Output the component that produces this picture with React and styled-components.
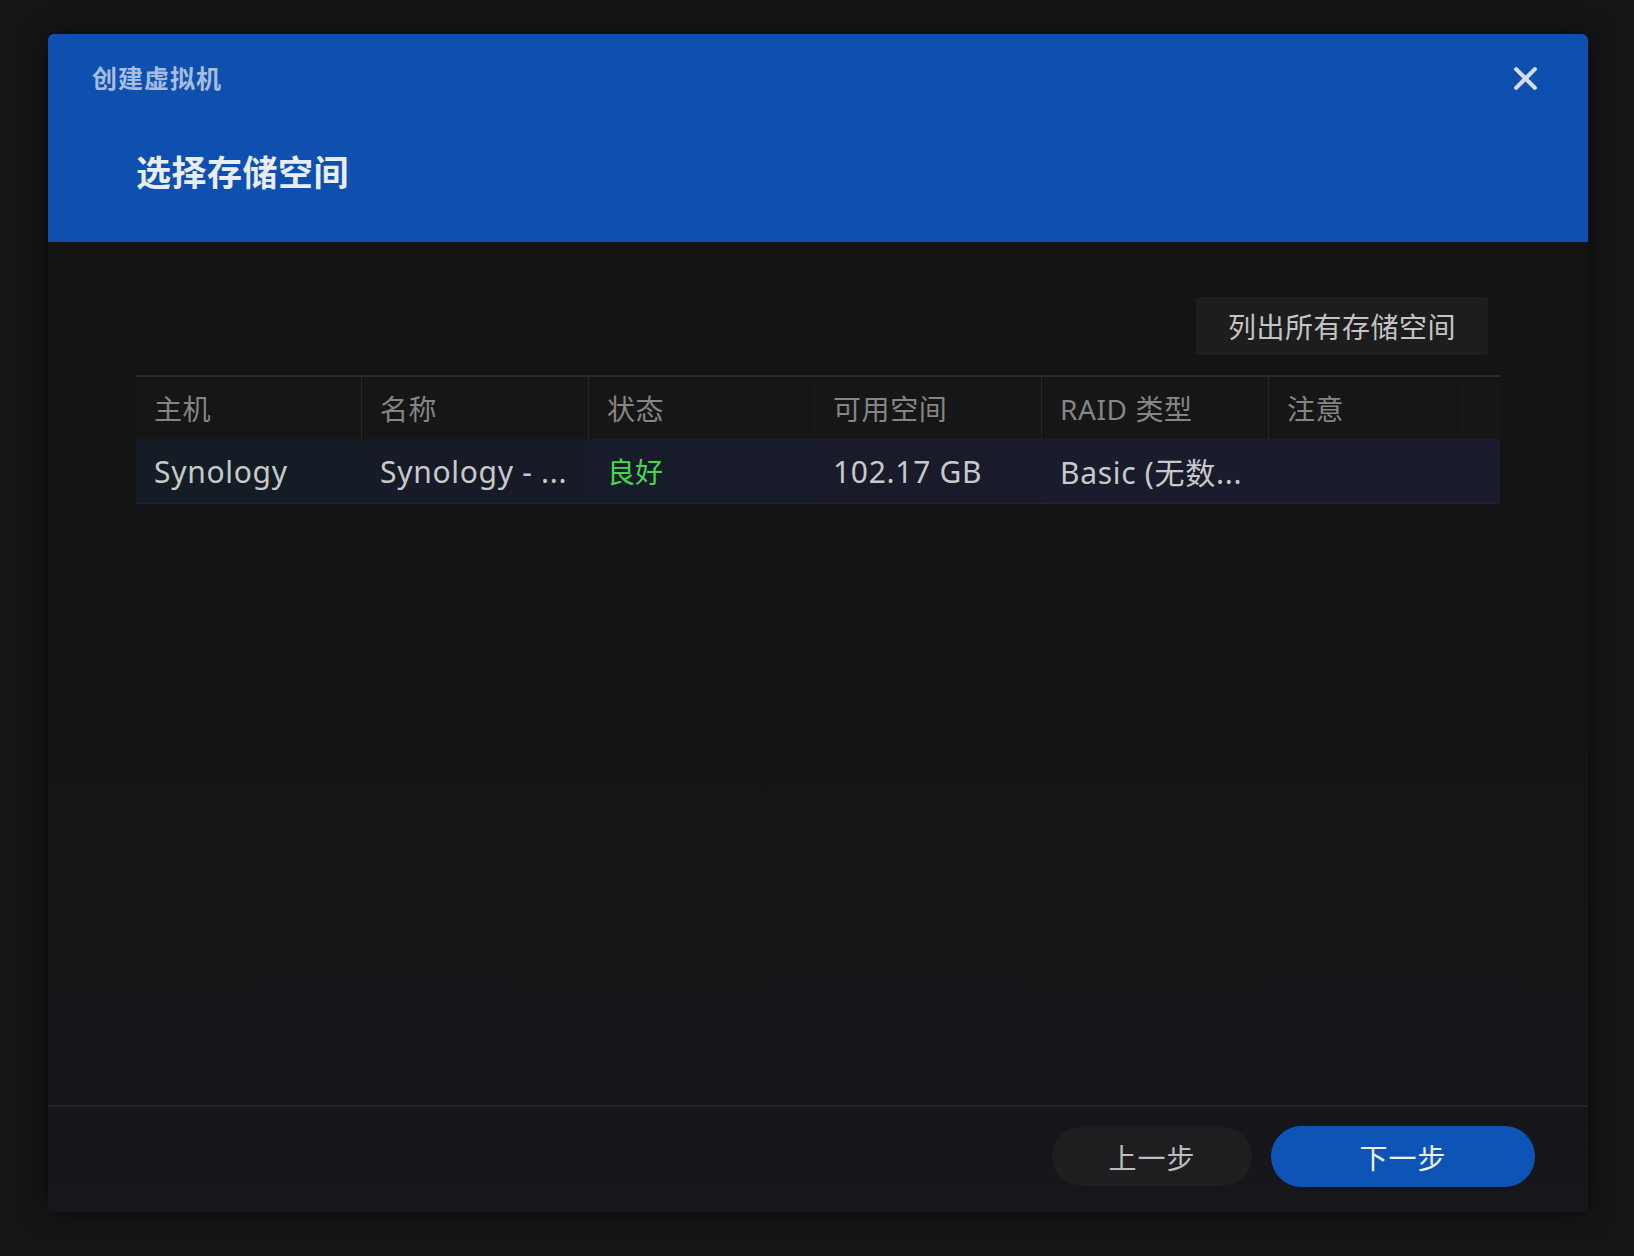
import React from "react";
import styled, { createGlobalStyle } from "styled-components";

const Global = createGlobalStyle`
  html, body { margin: 0; padding: 0; background: #141414; }
  body {
    font-family: "Noto Sans", "Noto Sans CJK SC", sans-serif;
    -webkit-font-smoothing: antialiased;
  }
  * { box-sizing: border-box; }
`;

const Page = styled.div`
  width: 1634px;
  height: 1256px;
  padding: 34px 0 0 48px;
  background: #151515;
`;

const Dialog = styled.div`
  width: 1540px;
  height: 1178px;
  display: flex;
  flex-direction: column;
  background: linear-gradient(180deg, #141414 0%, #141416 60%, #16161b 100%);
  border-radius: 6px;
  overflow: hidden;
  box-shadow: 0 0 24px rgba(0, 0, 0, 0.55);
`;

const Header = styled.div`
  height: 208px;
  flex: none;
  background: #0e4fb0;
  display: flex;
  flex-direction: column;
  padding: 24px 48px 0 44px;
`;

const TopBar = styled.div`
  display: flex;
  align-items: center;
  justify-content: space-between;
  height: 38px;
`;

const Caption = styled.div`
  font-size: 25px;
  font-weight: 700;
  color: #a6bddf;
  letter-spacing: 1px;
`;

const CloseBtn = styled.button`
  width: 30px;
  height: 30px;
  padding: 0;
  border: none;
  background: transparent;
  display: flex;
  align-items: center;
  justify-content: center;
  margin-top: 2px;
  cursor: pointer;
`;

const Title = styled.h1`
  margin: 57px 0 0 44px;
  font-size: 35px;
  font-weight: 700;
  color: #e8edf6;
  line-height: 40px;
  letter-spacing: 0.5px;
`;

const Body = styled.div`
  flex: 1;
  padding: 55px 88px 0 88px;
  display: flex;
  flex-direction: column;
`;

const Toolbar = styled.div`
  display: flex;
  justify-content: flex-end;
  padding-right: 12px;
  margin-bottom: 20px;
`;

const GhostButton = styled.button`
  height: 58px;
  width: 292px;
  border: none;
  border-radius: 4px;
  background: #1d1d1e;
  color: #c4c4c4;
  font-family: inherit;
  font-size: 28px;
  letter-spacing: 0.5px;
  cursor: pointer;
`;

const Table = styled.div`
  display: grid;
  grid-template-columns: 226px 227px 226px 227px 227px 194px 1fr;
  border-top: 2px solid #2a2a2b;
`;

const HeadCell = styled.div`
  height: 62px;
  display: flex;
  align-items: center;
  padding-left: 18px;
  background: #161616;
  color: #858585;
  font-size: 28px;
  letter-spacing: 0.6px;
  border-right: ${(p) => (p.$faint ? "1px solid #1b1b1b" : p.$last ? "none" : "1px solid #262626")};
`;

const Row = styled.div`
  display: contents;
`;

const Cell = styled.div`
  height: 65px;
  display: flex;
  align-items: center;
  padding-left: 18px;
  font-size: 30px;
  letter-spacing: 0.7px;
  color: ${(p) => (p.$ok ? "#42d94c" : "#c9c9c9")};
  background: ${(p) => p.$bg};
  border-bottom: 1px solid #1e2130;
  white-space: nowrap;
  overflow: hidden;
`;

const StatusText = styled.span`
  font-size: 28px;
  letter-spacing: 0;
`;

const Footer = styled.div`
  flex: none;
  height: 107px;
  border-top: 2px solid #232326;
  display: flex;
  align-items: center;
  justify-content: flex-end;
  gap: 19px;
  padding: 0 53px 6px 0;
`;

const PillButton = styled.button`
  height: ${(p) => (p.$primary ? "61px" : "59px")};
  width: ${(p) => (p.$primary ? "264px" : "200px")};
  border: none;
  border-radius: 31px;
  background: ${(p) => (p.$primary ? "#0e54b6" : "#1e1e21")};
  color: ${(p) => (p.$primary ? "#eef3fb" : "#bdbdbd")};
  font-family: inherit;
  font-size: 28px;
  letter-spacing: 1px;
  cursor: pointer;
`;

const columns = ["主机", "名称", "状态", "可用空间", "RAID 类型", "注意", ""];

const rowBgs = ["#141c25", "#171b28", "#181b29", "#191b2b", "#1a1b2c", "#1a1b2d", "#1a1b2d"];

const cells = [
  { t: "Synology" },
  { t: "Synology - ..." },
  { t: "良好", ok: true },
  { t: "102.17 GB" },
  { t: "Basic (无数..." },
  { t: "" },
  { t: "" },
];

export default function App() {
  return (
    <>
      <Global />
      <Page>
        <Dialog>
          <Header>
            <TopBar>
              <Caption>创建虚拟机</Caption>
              <CloseBtn aria-label="close">
                <svg width="25" height="25" viewBox="0 0 24 24">
                  <path
                    d="M3 3 L21 21 M21 3 L3 21"
                    stroke="#d3def0"
                    strokeWidth="4"
                    strokeLinecap="round"
                  />
                </svg>
              </CloseBtn>
            </TopBar>
            <Title>选择存储空间</Title>
          </Header>
          <Body>
            <Toolbar>
              <GhostButton>列出所有存储空间</GhostButton>
            </Toolbar>
            <Table>
              {columns.map((c, i) => (
                <HeadCell key={i} $faint={i === 2 || i === 5} $last={i === 6}>
                  {c}
                </HeadCell>
              ))}
              <Row>
                {cells.map((c, i) => (
                  <Cell key={i} $ok={c.ok} $bg={rowBgs[i]}>
                    {c.ok ? <StatusText>{c.t}</StatusText> : c.t}
                  </Cell>
                ))}
              </Row>
            </Table>
          </Body>
          <Footer>
            <PillButton>上一步</PillButton>
            <PillButton $primary>下一步</PillButton>
          </Footer>
        </Dialog>
      </Page>
    </>
  );
}
